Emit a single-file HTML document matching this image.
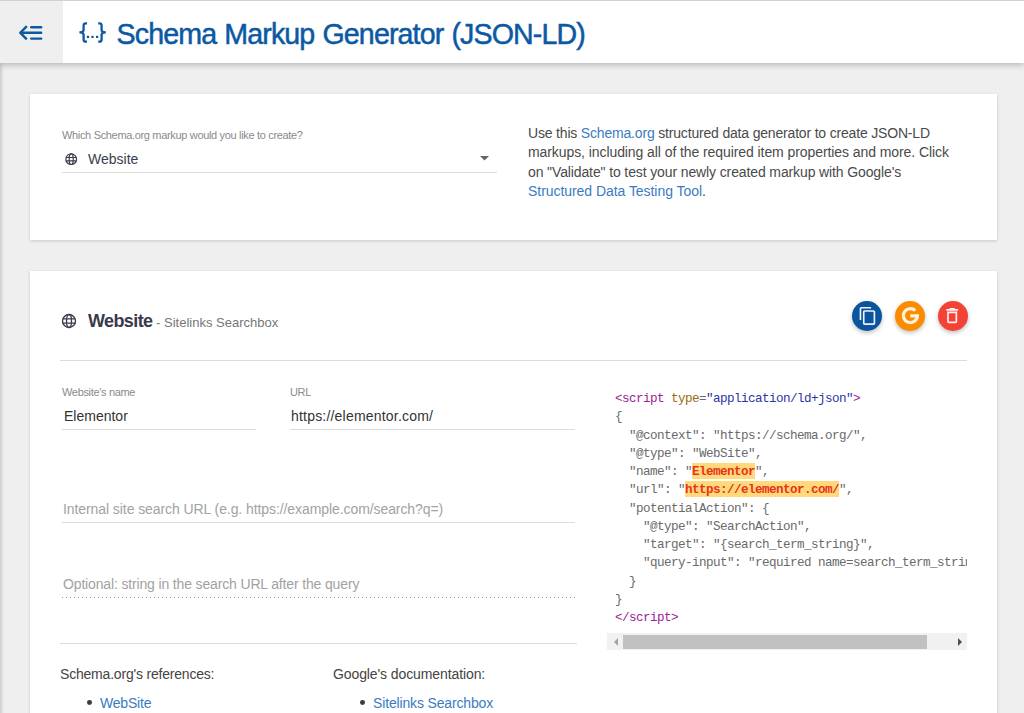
<!DOCTYPE html>
<html><head><meta charset="utf-8">
<style>
*{box-sizing:border-box;margin:0;padding:0}
html,body{width:1024px;height:713px;overflow:hidden;background:#efefef;font-family:"Liberation Sans",sans-serif;position:relative}
.abs{position:absolute;white-space:nowrap}
#leftstrip{position:absolute;left:0;top:63px;width:4px;height:650px;background:linear-gradient(to right,#cdcdcd,#eeeeee)}
#header{position:absolute;left:0;top:0;width:1024px;height:63px;background:#fff;box-shadow:0 2px 6px rgba(0,0,0,.24);border-top:1px solid #d2d2d2}
#backbox{position:absolute;left:0;top:0;width:63px;height:62px;background:#efefef}
.title{position:absolute;left:116.5px;top:17px;font-size:28.6px;letter-spacing:-0.87px;word-spacing:1px;color:#0b59a3;-webkit-text-stroke:0.5px #0b59a3}
.card{position:absolute;background:#fff;box-shadow:0 1px 3px rgba(0,0,0,.17)}
#card1{left:30px;top:94px;width:967px;height:146px}
#card2{left:30px;top:271px;width:967px;height:460px}
.lbl{font-size:11px;color:#8a8a8a;letter-spacing:-0.33px}
.inp{font-size:14px;color:#333}
.line{position:absolute;height:1px;background:#dcdcdc}
.para{font-size:14px;color:#4a4a4a;line-height:19.3px}
a,.lnk{color:#3b7bbf;text-decoration:none}
.code{font-family:"Liberation Mono",monospace;font-size:12.6px;letter-spacing:-0.56px;color:#6a6a6a;line-height:18.25px;white-space:pre}
.tag{color:#9b2393}
.attr{color:#9b6a12}
.str{color:#2b35a5}
.hl{background:#ffd97a;color:#e8321e;font-weight:bold;padding-top:2px}
.btn{position:absolute;width:30px;height:30px;border-radius:50%;box-shadow:0 2px 4px rgba(0,0,0,.25)}
</style></head><body>
<div id="leftstrip"></div>
<div id="header">
  <div id="backbox"></div>
  <svg style="position:absolute;left:0;top:-1px" width="120" height="63" viewBox="0 0 120 63">
    <path d="M26.8 26.2 L20.3 32.8 L26.8 39.4" stroke="#0d5aa1" stroke-width="2.4" fill="none" stroke-linejoin="round"/>
    <path d="M21 32.8 H41.2 M31.2 27.2 H41.2 M31.2 38.6 H41.2" stroke="#0d5aa1" stroke-width="2.4" fill="none" stroke-linecap="round"/>
    <path d="M87 23.3 H85.8 Q83.6 23.3 83.6 25.6 V30 Q83.6 32.4 79.4 32.4 Q83.6 32.4 83.6 34.8 V39.4 Q83.6 41.7 85.8 41.7 H87" stroke="#0d5aa1" stroke-width="2.3" fill="none"/>
    <path d="M98.2 23.3 H99.4 Q101.6 23.3 101.6 25.6 V30 Q101.6 32.4 105.8 32.4 Q101.6 32.4 101.6 34.8 V39.4 Q101.6 41.7 99.4 41.7 H98.2" stroke="#0d5aa1" stroke-width="2.3" fill="none"/>
    <rect x="86.9" y="35.8" width="2.2" height="2.2" fill="#0d5aa1"/>
    <rect x="91.4" y="35.8" width="2.2" height="2.2" fill="#0d5aa1"/>
    <rect x="96" y="35.8" width="2.2" height="2.2" fill="#0d5aa1"/>
  </svg>
  <div class="title abs">Schema Markup Generator (JSON-LD)</div>
</div>

<div class="card" id="card1"></div>
<div class="abs lbl" style="left:62px;top:129px">Which Schema.org markup would you like to create?</div>
<svg class="abs" style="left:62.75px;top:150.65px" width="16.4" height="16.4" viewBox="0 0 20 20"><g fill="none" stroke="#3c3c50" stroke-width="1.45"><circle cx="10" cy="10" r="6.5"/><ellipse cx="10" cy="10" rx="2.5" ry="6.5"/><path d="M3.5 7.9H16.5M3.5 12.1H16.5"/></g></svg>
<div class="abs inp" style="left:88px;top:151px;color:#3c3c50">Website</div>
<svg class="abs" style="left:480px;top:156px" width="9" height="5"><path d="M0 0 L9 0 L4.5 4.5z" fill="#666"/></svg>
<div class="line" style="left:62px;top:172px;width:435px"></div>
<div class="abs para" style="left:528px;top:124px"><span style="letter-spacing:-0.18px">Use this <span class="lnk">Schema.org</span> structured data generator to create JSON-LD</span><br><span style="letter-spacing:-0.08px">markups, including all of the required item properties and more. Click</span><br><span style="letter-spacing:-0.12px">on "Validate" to test your newly created markup with Google's</span><br><span style="letter-spacing:-0.05px"><span class="lnk">Structured Data Testing Tool</span>.</span></div>

<div class="card" id="card2"></div>
<svg class="abs" style="left:58.85px;top:310.5px" width="20" height="20" viewBox="0 0 20 20"><g fill="none" stroke="#3c3c50" stroke-width="1.35"><circle cx="10" cy="10" r="6.5"/><ellipse cx="10" cy="10" rx="2.5" ry="6.5"/><path d="M3.5 7.9H16.5M3.5 12.1H16.5"/></g></svg>
<div class="abs" style="left:88px;top:311px;font-size:18px;font-weight:bold;color:#3a3a4c;letter-spacing:-0.6px">Website<span style="font-size:13px;font-weight:normal;color:#777;letter-spacing:0"> - Sitelinks Searchbox</span></div>
<div class="btn" style="left:852px;top:301px;background:#0b559e"></div>
<div class="btn" style="left:895px;top:301px;background:#fb8c00"></div>
<div class="btn" style="left:938px;top:301px;background:#f44336"></div>
<svg class="abs" style="left:840px;top:290px" width="140" height="50" viewBox="840 290 140 50">
  <g transform="translate(858 306.1) scale(0.82)"><path fill="#eef3f8" d="M16 1H4c-1.1 0-2 .9-2 2v14h2V3h12V1zm3 4H8c-1.1 0-2 .9-2 2v14c0 1.1.9 2 2 2h11c1.1 0 2-.9 2-2V7c0-1.1-.9-2-2-2zm0 16H8V7h11v14z"/></g>
  <path d="M915.3 310.6 A7 7 0 1 0 917.4 315.9 H910.3" stroke="#fff3e0" stroke-width="3.1" fill="none"/>
  <g transform="translate(942.1 305.6) scale(0.84)"><path fill="#fff0f0" d="M6 19c0 1.1.9 2 2 2h8c1.1 0 2-.9 2-2V7H6v12zM8 9h8v10H8V9zm7.5-5l-1-1h-5l-1 1H5v2h14V4z"/></g>
</svg>
<div class="line" style="left:60px;top:360px;width:907px"></div>

<div class="abs lbl" style="left:62px;top:386px">Website's name</div>
<div class="abs inp" style="left:64px;top:408px">Elementor</div>
<div class="line" style="left:62px;top:429px;width:194px"></div>
<div class="abs lbl" style="left:290px;top:386px">URL</div>
<div class="abs inp" style="left:291px;top:408px;letter-spacing:0.2px">https://elementor.com/</div>
<div class="line" style="left:290px;top:429px;width:285px"></div>

<div class="abs inp" style="left:63px;top:501px;color:#a2a2a2;letter-spacing:-0.08px">Internal site search URL (e.g. https://example.com/search?q=)</div>
<div class="line" style="left:62px;top:522px;width:513px"></div>
<div class="abs inp" style="left:63px;top:576px;color:#a2a2a2;letter-spacing:-0.15px">Optional: string in the search URL after the query</div>
<div class="abs" style="left:62px;top:597px;width:513px;height:1px;background:repeating-linear-gradient(to right,#9a9a9a 0,#9a9a9a 1.5px,transparent 1.5px,transparent 4px)"></div>
<div class="line" style="left:60px;top:643px;width:517px"></div>

<div class="abs inp" style="left:60px;top:666px;color:#444;letter-spacing:-0.2px">Schema.org's references:</div>
<div class="abs" style="left:87px;top:700.3px;width:4.8px;height:4.8px;border-radius:50%;background:#3a3a48"></div>
<div class="abs inp lnk" style="left:100px;top:695px;letter-spacing:-0.2px">WebSite</div>
<div class="abs inp" style="left:333px;top:666px;color:#444;letter-spacing:-0.1px">Google's documentation:</div>
<div class="abs" style="left:360px;top:700.3px;width:4.8px;height:4.8px;border-radius:50%;background:#3a3a48"></div>
<div class="abs inp lnk" style="left:373px;top:695px;letter-spacing:-0.15px">Sitelinks Searchbox</div>

<div class="abs" style="left:607px;top:385px;width:360px;height:265px;overflow:hidden">
<div class="code" style="position:absolute;left:8px;top:5px"><span class="tag">&lt;script</span> <span class="attr">type</span>=<span class="str">"application/ld+json"</span><span class="tag">&gt;</span>
{
  "@context": "https://schema.org/",
  "@type": "WebSite",
  "name": "<span class="hl">Elementor</span>",
  "url": "<span class="hl">https://elementor.com/</span>",
  "potentialAction": {
    "@type": "SearchAction",
    "target": "{search_term_string}",
    "query-input": "required name=search_term_string"
  }
}
<span class="tag">&lt;/script&gt;</span></div>
<div style="position:absolute;left:0;top:248px;width:360px;height:17px;background:#f1f1f1"></div>
<div style="position:absolute;left:16px;top:250px;width:304px;height:14px;background:#c1c1c1"></div>
<svg style="position:absolute;left:6px;top:253px" width="6" height="8"><path d="M5 0 L1 4 L5 8z" fill="#a3a3a3"/></svg>
<svg style="position:absolute;left:350px;top:253px" width="6" height="8"><path d="M1 0 L5 4 L1 8z" fill="#505050"/></svg>
</div>
</body></html>
